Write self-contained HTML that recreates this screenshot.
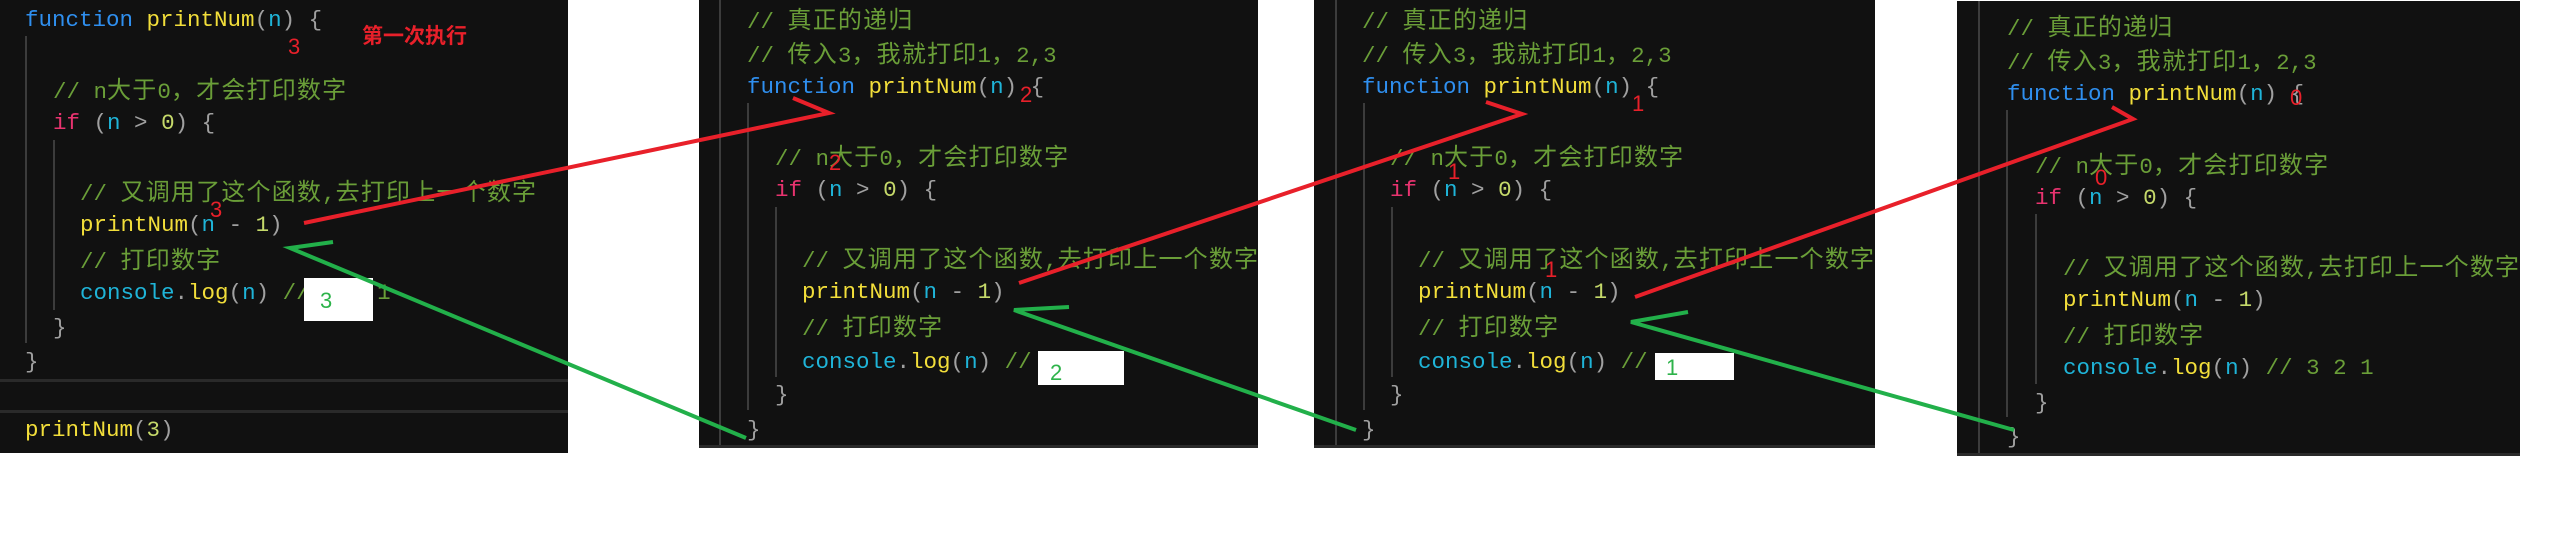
<!DOCTYPE html>
<html><head><meta charset="utf-8"><style>
body{margin:0;width:2568px;height:556px;background:#fff;position:relative;overflow:hidden;font-family:"Liberation Mono","Noto Sans CJK SC",monospace;}
.pn{position:absolute;background:#111;overflow:hidden;}
.l{position:absolute;white-space:pre;font-size:22.5px;line-height:34px;height:34px;color:#a0a0a0;}
.z{font-family:"Noto Sans CJK SC",sans-serif;font-size:24px;letter-spacing:1.2px;}
.k{color:#2f8fef}.f{color:#f2de3a}.v{color:#1fb4d8}.c{color:#6a9e38}.p{color:#e8336f}.n{color:#c5d96a}.g{color:#a0a0a0}
.gd{position:absolute;width:2px;background:#3c3c3c;}
.r{position:absolute;color:#e8202a;font-family:"Liberation Sans",sans-serif;font-size:22px;line-height:22px;}
.wb{position:absolute;background:#fff;}
.gn{position:absolute;color:#2db34a;font-family:"Liberation Sans",sans-serif;font-size:22px;}
</style></head><body>

<!-- Panel 1 -->
<div class="pn" style="left:0;top:0;width:568px;height:453px;">
<div class="gd" style="left:25px;top:36px;height:307px"></div>
<div class="gd" style="left:53px;top:140px;height:170px"></div>
<div class="l" style="left:25px;top:3px"><span class="k">function</span> <span class="f">printNum</span>(<span class="v">n</span>) {</div>
<div class="l c" style="left:53px;top:71px">// n<span class="z">大于</span>0<span class="z">，才会打印数字</span></div>
<div class="l" style="left:53px;top:106px"><span class="p">if</span> (<span class="v">n</span> &gt; <span class="n">0</span>) {</div>
<div class="l c" style="left:80px;top:173px">// <span class="z">又调用了这个函数</span>,<span class="z">去打印上一个数字</span></div>
<div class="l" style="left:80px;top:208px"><span class="f">printNum</span>(<span class="v">n</span> - <span class="n">1</span>)</div>
<div class="l c" style="left:80px;top:241px">// <span class="z">打印数字</span></div>
<div class="l" style="left:80px;top:276px"><span class="v">console</span>.<span class="f">log</span>(<span class="v">n</span>) <span class="c">// 3 2 1</span></div>
<div class="l" style="left:53px;top:311px">}</div>
<div class="l" style="left:25px;top:345px">}</div>
<div style="position:absolute;left:0;top:379px;width:568px;height:3px;background:#2a2a2a"></div>
<div style="position:absolute;left:0;top:410px;width:568px;height:3px;background:#2a2a2a"></div>
<div class="l" style="left:25px;top:413px"><span class="f">printNum</span>(<span class="n">3</span>)</div>
</div>

<!-- Panel 2 -->
<div class="pn" style="left:699px;top:0;width:559px;height:448px;border-bottom:3px solid #2a2a2a;box-sizing:border-box">
<div class="gd" style="left:20px;top:0;height:448px"></div>
<div class="gd" style="left:48px;top:103px;height:307px"></div>
<div class="gd" style="left:76px;top:207px;height:170px"></div>
<div class="l c" style="left:48px;top:1px">// <span class="z">真正的递归</span></div>
<div class="l c" style="left:48px;top:35px">// <span class="z">传入</span>3<span class="z">，我就打印</span>1<span class="z">，</span>2,3</div>
<div class="l" style="left:48px;top:70px"><span class="k">function</span> <span class="f">printNum</span>(<span class="v">n</span>) {</div>
<div class="l c" style="left:76px;top:138px">// n<span class="z">大于</span>0<span class="z">，才会打印数字</span></div>
<div class="l" style="left:76px;top:173px"><span class="p">if</span> (<span class="v">n</span> &gt; <span class="n">0</span>) {</div>
<div class="l c" style="left:103px;top:240px">// <span class="z">又调用了这个函数</span>,<span class="z">去打印上一个数字</span></div>
<div class="l" style="left:103px;top:275px"><span class="f">printNum</span>(<span class="v">n</span> - <span class="n">1</span>)</div>
<div class="l c" style="left:103px;top:308px">// <span class="z">打印数字</span></div>
<div class="l" style="left:103px;top:345px"><span class="v">console</span>.<span class="f">log</span>(<span class="v">n</span>) <span class="c">// 3 2 1</span></div>
<div class="l" style="left:76px;top:378px">}</div>
<div class="l" style="left:48px;top:413px">}</div>
</div>

<!-- Panel 3 -->
<div class="pn" style="left:1314px;top:0;width:561px;height:448px;border-bottom:3px solid #2a2a2a;box-sizing:border-box">
<div class="gd" style="left:21px;top:0;height:448px"></div>
<div class="gd" style="left:49px;top:103px;height:307px"></div>
<div class="gd" style="left:77px;top:207px;height:170px"></div>
<div class="l c" style="left:48px;top:1px">// <span class="z">真正的递归</span></div>
<div class="l c" style="left:48px;top:35px">// <span class="z">传入</span>3<span class="z">，我就打印</span>1<span class="z">，</span>2,3</div>
<div class="l" style="left:48px;top:70px"><span class="k">function</span> <span class="f">printNum</span>(<span class="v">n</span>) {</div>
<div class="l c" style="left:76px;top:138px">// n<span class="z">大于</span>0<span class="z">，才会打印数字</span></div>
<div class="l" style="left:76px;top:173px"><span class="p">if</span> (<span class="v">n</span> &gt; <span class="n">0</span>) {</div>
<div class="l c" style="left:104px;top:240px">// <span class="z">又调用了这个函数</span>,<span class="z">去打印上一个数字</span></div>
<div class="l" style="left:104px;top:275px"><span class="f">printNum</span>(<span class="v">n</span> - <span class="n">1</span>)</div>
<div class="l c" style="left:104px;top:308px">// <span class="z">打印数字</span></div>
<div class="l" style="left:104px;top:345px"><span class="v">console</span>.<span class="f">log</span>(<span class="v">n</span>) <span class="c">// 3 2 1</span></div>
<div class="l" style="left:76px;top:378px">}</div>
<div class="l" style="left:48px;top:413px">}</div>
</div>

<!-- Panel 4 -->
<div class="pn" style="left:1957px;top:1px;width:563px;height:455px;border-bottom:3px solid #2a2a2a;box-sizing:border-box">
<div class="gd" style="left:21px;top:0;height:455px"></div>
<div class="gd" style="left:49px;top:109px;height:307px"></div>
<div class="gd" style="left:78px;top:213px;height:170px"></div>
<div class="l c" style="left:50px;top:7px">// <span class="z">真正的递归</span></div>
<div class="l c" style="left:50px;top:41px">// <span class="z">传入</span>3<span class="z">，我就打印</span>1<span class="z">，</span>2,3</div>
<div class="l" style="left:50px;top:76px"><span class="k">function</span> <span class="f">printNum</span>(<span class="v">n</span>) {</div>
<div class="l c" style="left:78px;top:145px">// n<span class="z">大于</span>0<span class="z">，才会打印数字</span></div>
<div class="l" style="left:78px;top:180px"><span class="p">if</span> (<span class="v">n</span> &gt; <span class="n">0</span>) {</div>
<div class="l c" style="left:106px;top:247px">// <span class="z">又调用了这个函数</span>,<span class="z">去打印上一个数字</span></div>
<div class="l" style="left:106px;top:282px"><span class="f">printNum</span>(<span class="v">n</span> - <span class="n">1</span>)</div>
<div class="l c" style="left:106px;top:315px">// <span class="z">打印数字</span></div>
<div class="l" style="left:106px;top:350px"><span class="v">console</span>.<span class="f">log</span>(<span class="v">n</span>) <span class="c">// 3 2 1</span></div>
<div class="l" style="left:78px;top:385px">}</div>
<div class="l" style="left:50px;top:419px">}</div>
</div>

<!-- white boxes -->
<div class="wb" style="left:304px;top:278px;width:69px;height:43px"></div>
<div class="gn" style="left:320px;top:288px">3</div>
<div class="wb" style="left:1038px;top:351px;width:86px;height:34px"></div>
<div class="gn" style="left:1050px;top:360px">2</div>
<div class="wb" style="left:1655px;top:353px;width:79px;height:27px"></div>
<div class="gn" style="left:1666px;top:355px">1</div>

<!-- red annotations -->
<div class="r" style="left:288px;top:36px">3</div>
<div style="position:absolute;left:362px;top:20px;color:#e8202a;font-family:'Noto Sans CJK SC',sans-serif;font-size:21px;font-weight:bold;">第一次执行</div>
<div class="r" style="left:210px;top:199px">3</div>
<div class="r" style="left:1020px;top:84px">2</div>
<div class="r" style="left:829px;top:152px">2</div>
<div class="r" style="left:1632px;top:93px">1</div>
<div class="r" style="left:1448px;top:161px">1</div>
<div class="r" style="left:1545px;top:259px">1</div>
<div class="r" style="left:2290px;top:87px">0</div>
<div class="r" style="left:2095px;top:167px">0</div>

<svg style="position:absolute;left:0;top:0" width="2568" height="556">
<g fill="none" stroke-width="4" stroke-linejoin="miter">
<polyline stroke="#e8202a" points="304,223 829,113 793,98"/>
<polyline stroke="#e8202a" points="1019,283 1522,114 1486,102"/>
<polyline stroke="#e8202a" points="1635,297 2133,119 2112,107"/>
<polyline stroke="#22b04a" points="746,438 290,248 333,242"/>
<polyline stroke="#22b04a" points="1356,430 1014,310 1069,307"/>
<polyline stroke="#22b04a" points="2014,430 1631,322 1688,312"/>
</g>
</svg>
</body></html>
